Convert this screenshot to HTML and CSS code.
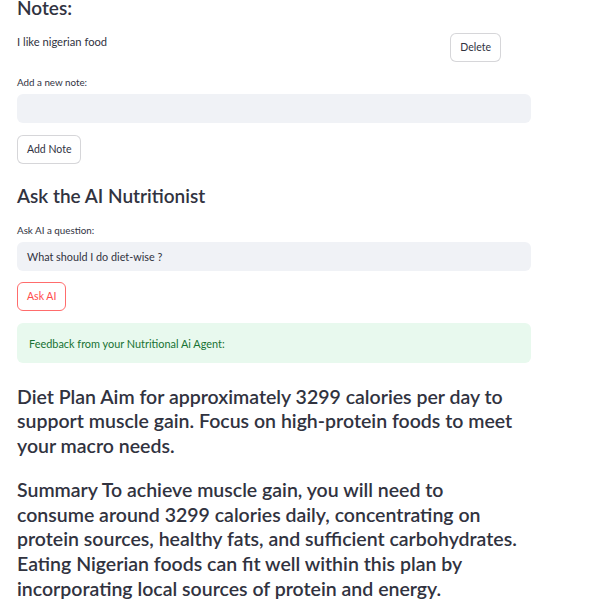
FILE: index.html
```html
<!DOCTYPE html>
<html>
<head>
<meta charset="utf-8">
<link rel="stylesheet" href="styles.css">
</head>
<body>
<div class="main">
  <h3 class="heading notes-heading">Notes:</h3>
  <div class="note-row">
    <p class="note-text">I like nigerian food</p>
    <button class="btn delete-btn">Delete</button>
  </div>
  <label class="label label-note">Add a new note:</label>
  <div class="input"></div>
  <button class="btn add-btn">Add Note</button>

  <h3 class="heading ai-heading">Ask the AI Nutritionist</h3>
  <label class="label label-ask">Ask AI a question:</label>
  <div class="input"><span class="input-text">What should I do diet-wise ?</span></div>
  <button class="btn ask-btn">Ask AI</button>

  <div class="feedback">Feedback from your Nutritional Ai Agent:</div>

  <p class="answer answer-first">Diet Plan Aim for approximately 3299 calories per day to support muscle gain. Focus on high-protein foods to meet your macro needs.</p>
  <p class="answer">Summary To achieve muscle gain, you will need to<br>consume around 3299 calories daily, concentrating on<br>protein sources, healthy fats, and sufficient carbohydrates.<br>Eating Nigerian foods can fit well within this plan by<br>incorporating local sources of protein and energy.</p>
</div>
</body>
</html>
```

FILE: styles.css
```css
* { box-sizing: border-box; }
html, body { margin: 0; padding: 0; background: #ffffff; overflow: hidden; }
body {
  font-family: Lato, "Liberation Sans", sans-serif;
  color: #31333f;
}
.main {
  width: 514px;
  margin-left: 17px;
  display: flex;
  flex-direction: column;
  align-items: flex-start;
}
.heading {
  margin: 0;
  font-size: 19px;
  font-weight: 600;
  line-height: 24px;
  width: 100%;
}
.notes-heading { margin-top: -4px; }
.note-row {
  margin-top: 13px;
  width: 100%;
  display: flex;
  justify-content: space-between;
  align-items: flex-start;
  height: 29px;
}
.note-text {
  margin: 0;
  font-size: 11.2px;
  line-height: 17px;
}
.btn {
  font-family: inherit;
  font-size: 10.5px;
  color: #31333f;
  background: #ffffff;
  border: 1px solid rgba(49, 51, 63, 0.2);
  border-radius: 6px;
  height: 29px;
  padding: 0 9px;
  line-height: 27px;
  cursor: pointer;
}
.delete-btn { margin-right: 30px; }
.label {
  display: block;
  font-size: 9.8px;
  line-height: 14px;
}
.label-note { margin-top: 13px; }
.input {
  margin-top: 5px;
  width: 100%;
  height: 29px;
  background: #f0f2f6;
  border-radius: 6px;
  padding: 0 10px;
  display: flex;
  align-items: center;
  font-size: 10.8px;
}
.add-btn { margin-top: 12px; }
.ai-heading { margin-top: 20px; }
.label-ask { margin-top: 15px; }
.ask-btn {
  margin-top: 11px;
  color: #ff4b4b;
  border-color: #ff6c6c;
}
.feedback {
  margin-top: 12px;
  width: 100%;
  height: 40px;
  background: #e8f9ee;
  color: #177233;
  border-radius: 6px;
  padding: 0 12px;
  display: flex;
  align-items: center;
  font-size: 10.9px;
}
.answer {
  margin: 0;
  font-size: 19.5px;
  font-weight: 600;
  line-height: 24.4px;
  width: 100%;
}
.answer-first { margin-top: 22px; }
.answer + .answer { margin-top: 20px; line-height: 24.6px; }
```
